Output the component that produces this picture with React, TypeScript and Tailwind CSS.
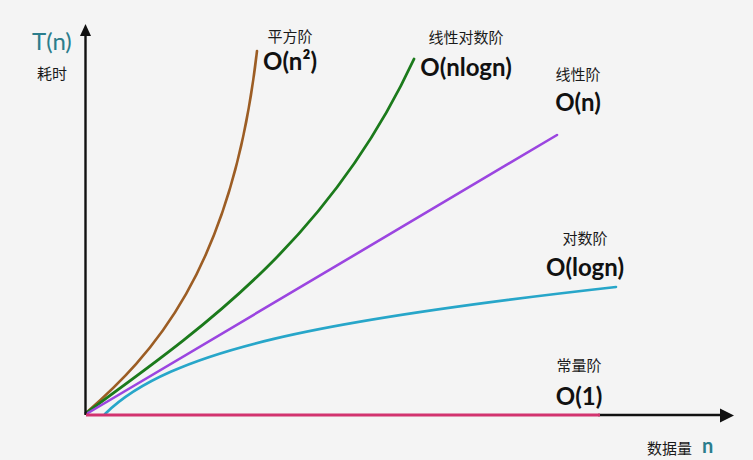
const cjk = "font-['Noto_Sans_CJK_SC',sans-serif] text-[15px] leading-none text-[#1a1a1a]"
const big = "font-['Lato','Noto_Sans',sans-serif] font-bold text-[24px] leading-none text-[#111]"

interface LabelProps {
  name: string
  order: string
  at: string
  gap: string
}

// name of the order above its big-O formula, both centred on one point
function CurveLabel({ name, order, at, gap }: LabelProps) {
  return (
    <div className={`absolute ${at} flex -translate-x-1/2 flex-col items-center ${gap}`}>
      <span className={cjk}>{name}</span>
      <span className={big}>{order}</span>
    </div>
  )
}

export default function App() {
  return (
    <div className="relative h-[460px] w-[753px] overflow-hidden bg-[#f4f4f4]">
      <svg className="absolute inset-0" width="753" height="460" viewBox="0 0 753 460">
        <path d="M86,413 C150,357 232,272 257,51" fill="none" stroke="#9c5d24" strokeWidth="2.6" strokeLinecap="round" />
        <path d="M86,413 C200,330 330,240 414,59" fill="none" stroke="#1b7a1b" strokeWidth="2.8" strokeLinecap="round" />
        <path d="M88,413 L557,135" fill="none" stroke="#9b45e0" strokeWidth="2.6" strokeLinecap="round" />
        <path d="M105,414 C170,350 320,320 616,287" fill="none" stroke="#27a6c9" strokeWidth="2.6" strokeLinecap="round" />
        <line x1="85.5" y1="415" x2="85.5" y2="34" stroke="#111" strokeWidth="2.4" />
        <polygon points="85.5,24 80,36 91,36" fill="#111" />
        <line x1="598" y1="415" x2="722" y2="415" stroke="#111" strokeWidth="2.6" />
        <polygon points="734,415.5 720,408.5 720,422.5" fill="#111" />
        <line x1="86" y1="415" x2="600" y2="415" stroke="#d2336f" strokeWidth="3" />
      </svg>

      <div className="absolute left-[32px] top-[29px] flex flex-col items-center gap-[12px]">
        <span className="font-['Lato',sans-serif] text-[24px] leading-none text-[#2b7d8c]">T(n)</span>
        <span className={cjk}>耗时</span>
      </div>

      <CurveLabel name="平方阶" order="O(n²)" at="left-[290px] top-[28px]" gap="gap-[6px]" />
      <CurveLabel name="线性对数阶" order="O(nlogn)" at="left-[466px] top-[29px]" gap="gap-[11px]" />
      <CurveLabel name="线性阶" order="O(n)" at="left-[578px] top-[66px]" gap="gap-[9px]" />
      <CurveLabel name="对数阶" order="O(logn)" at="left-[585px] top-[230px]" gap="gap-[10px]" />
      <CurveLabel name="常量阶" order="O(1)" at="left-[579px] top-[357px]" gap="gap-[12px]" />

      <div className="absolute left-[647px] top-[435px] flex items-end gap-[10px]">
        <span className={cjk}>数据量</span>
        <span className="font-['Lato',sans-serif] text-[20px] font-bold leading-none text-[#2b7d8c]">n</span>
      </div>
    </div>
  )
}
